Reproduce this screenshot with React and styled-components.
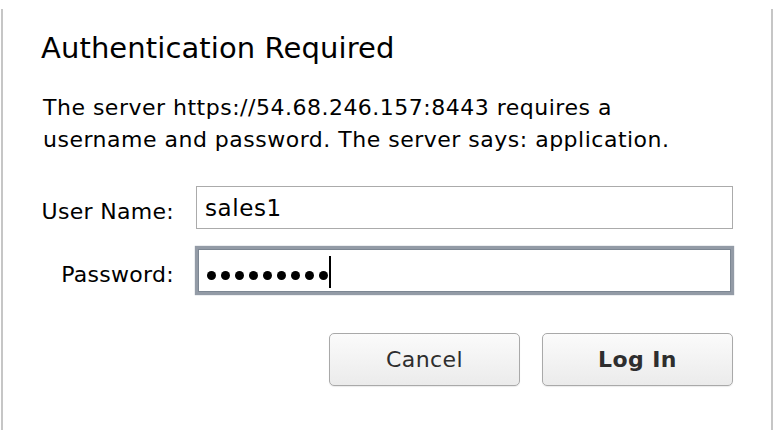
import React from "react";
import styled, { createGlobalStyle } from "styled-components";

const GlobalStyle = createGlobalStyle`
  html, body {
    margin: 0;
    padding: 0;
    background: #ffffff;
  }
  body {
    font-family: "DejaVu Sans", "Liberation Sans", sans-serif;
    color: #000;
  }
`;

const Window = styled.div`
  box-sizing: border-box;
  width: 772px;
  height: 421px;
  margin: 9px 0 0 1px;
  border-left: 2px solid #c6c6c6;
  border-right: 2px solid #c6c6c6;
  background: #ffffff;
  padding: 22px 38px 0 38px;
  display: flex;
  flex-direction: column;
`;

const Title = styled.h1`
  margin: 0;
  font-size: 29px;
  line-height: 35px;
  font-weight: normal;
  letter-spacing: 0.1px;
`;

const Message = styled.p`
  margin: 26px 0 0 2px;
  font-size: 22px;
  line-height: 32px;
  letter-spacing: 0.5px;
`;

const Form = styled.div`
  margin-top: 30px;
  display: grid;
  grid-template-columns: 133px 1fr;
  column-gap: 22px;
  row-gap: 20px;
  align-items: center;
`;

const Label = styled.label`
  font-size: 22px;
  letter-spacing: 0.3px;
  text-align: right;
  padding-top: 7px;
`;

const Field = styled.div`
  box-sizing: border-box;
  height: 43px;
  border: 1px solid ${(p) => (p.$focused ? "#7d8793" : "#ababab")};
  background: #fff;
  display: flex;
  align-items: center;
  padding-left: 8px;
  font-size: 23px;
  letter-spacing: 0.6px;
  box-shadow: ${(p) =>
    p.$focused ? "0 0 1px 3px rgba(128, 138, 150, 0.85)" : "none"};
  margin: ${(p) => (p.$focused ? "0 2px" : "0")};
`;

const Dots = styled.div`
  display: flex;
  align-items: center;
  gap: 5px;
  margin-top: 9px;
`;

const Dot = styled.span`
  width: 9px;
  height: 9px;
  border-radius: 50%;
  background: #000;
`;

const Caret = styled.span`
  width: 2px;
  height: 32px;
  background: #000;
  margin-left: 1px;
  margin-top: 3px;
`;

const Actions = styled.div`
  margin-top: 41px;
  display: flex;
  justify-content: flex-end;
  gap: 22px;
`;

const Button = styled.button`
  box-sizing: border-box;
  width: 191px;
  height: 53px;
  border: 1px solid #a9a9a9;
  border-radius: 5px;
  background: linear-gradient(#fbfbfb, #ebebeb);
  box-shadow: 0 1px 1px rgba(0, 0, 0, 0.08);
  font-family: "DejaVu Sans", "Liberation Sans", sans-serif;
  font-size: 22px;
  letter-spacing: 0.4px;
  font-weight: ${(p) => (p.$primary ? "bold" : "normal")};
  color: #2e2e2e;
  padding: 0;
`;

export default function App() {
  return (
    <>
      <GlobalStyle />
      <Window>
        <Title>Authentication Required</Title>
        <Message>
          The server https://54.68.246.157:8443 requires a
          <br />
          username and password. The server says: application.
        </Message>
        <Form>
          <Label>User Name:</Label>
          <Field>sales1</Field>
          <Label>Password:</Label>
          <Field $focused>
            <Dots>
              {Array.from({ length: 9 }).map((_, i) => (
                <Dot key={i} />
              ))}
            </Dots>
            <Caret />
          </Field>
        </Form>
        <Actions>
          <Button>Cancel</Button>
          <Button $primary>Log In</Button>
        </Actions>
      </Window>
    </>
  );
}
